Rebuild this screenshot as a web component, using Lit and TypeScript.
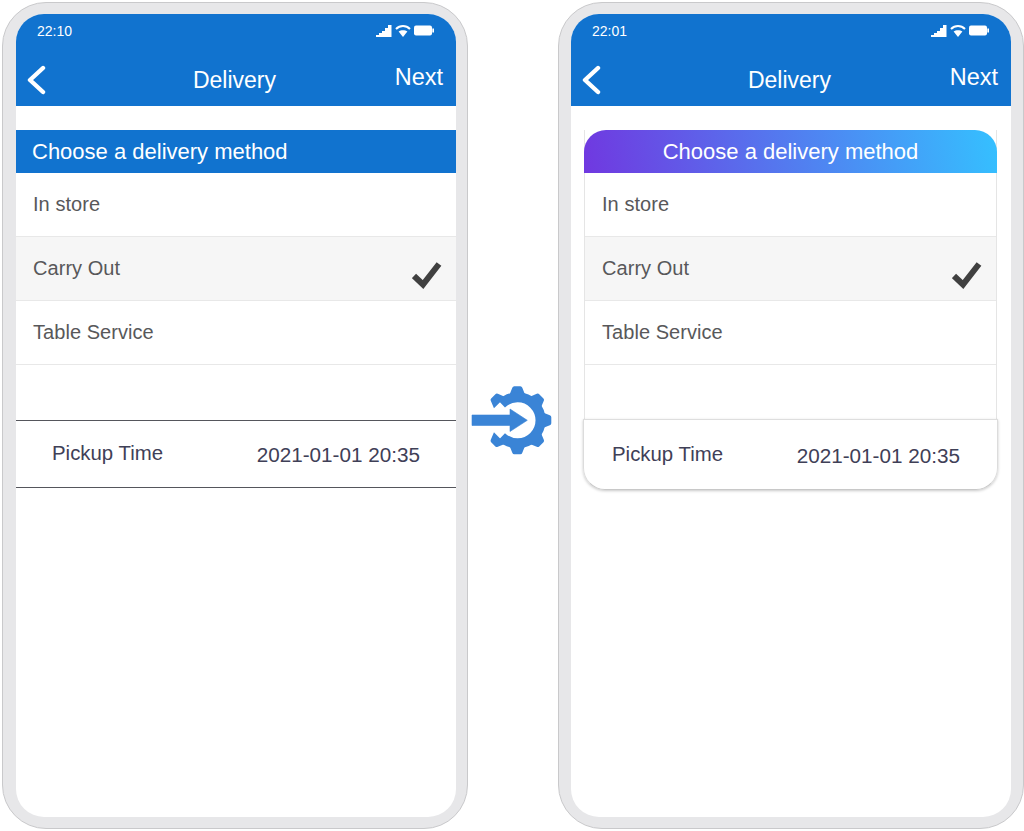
import { LitElement, html, css, svg } from "lit";
import { customElement, property } from "lit/decorators.js";

@customElement("phone-screen")
class PhoneScreen extends LitElement {
  @property() time = "";
  @property({ type: Boolean, reflect: true }) fancy = false;

  static styles = css`
    :host { display: block; width: 466px; height: 827px; }
    .frame {
      box-sizing: border-box; width: 100%; height: 100%;
      background: #e7e7e9; border: 1px solid #c9c9cb; border-radius: 44px;
      padding: 11px 11px 11px 13px;
    }
    :host([fancy]) .frame { padding: 11px 12px 11px 12px; }
    .screen {
      height: 100%; background: #fff; border-radius: 28px; overflow: hidden;
      font-family: "Liberation Sans", Arial, sans-serif; display: flex; flex-direction: column;
    }
    .top { background: #1173cf; height: 92px; color: #fff; flex: none; display: flex; flex-direction: column; }
    .status { height: 33px; display: flex; align-items: center; justify-content: space-between; padding: 0 22px 0 21px; font-size: 14px; }
    .status-icons { display: flex; align-items: center; gap: 3px; }
    .nav { display: grid; grid-template-columns: 1fr auto 1fr; padding: 0 13px 0 10px; align-items: center; height: 59px; }
    .nav svg { display: block; margin-top: 7px; }
    .title { font-size: 23px; margin-top: 8px; }
    .next { justify-self: end; font-size: 23.5px; margin-top: 2px; }
    .body { padding-top: 24px; display: flex; flex-direction: column; }
    .card { display: flex; flex-direction: column; }
    :host([fancy]) .card { margin: 0 14px 0 13px; border-left: 1px solid #e5e5e5; border-right: 1px solid #e5e5e5; }
    .head {
      background: #1173cf; color: #fff; height: 43px; line-height: 44px; font-size: 22px;
      padding-left: 16px;
    }
    :host([fancy]) .head {
      background: linear-gradient(80deg, #7038e0 0%, #35c0ff 100%); border-radius: 22px 22px 0 0;
      margin: 0 -1px; padding: 0; text-align: center;
    }
    .row {
      box-sizing: border-box; height: 64px; border-bottom: 1.5px solid #e8e8e8; padding: 0 14px 0 17px;
      font-size: 20px; letter-spacing: .05px; color: #58585a; display: flex; justify-content: space-between; position: relative;
    }
    :host([fancy]) .row { padding: 0 14px 0 17px; }
    .row span { margin-top: 20px; }
    .row.sel { background: #f6f6f6; }
    .row svg { margin-top: 25px; }
    .blank { height: 55px; }
    :host([fancy]) .blank { height: 54px; }
    .pickup {
      box-sizing: border-box; height: 68px; border-top: 1.5px solid #55565c; border-bottom: 1.5px solid #55565c;
      display: flex; justify-content: space-between; align-items: center; padding: 2px 36px 0 36px;
      color: #3f4057; font-size: 20.7px;
    }
    :host([fancy]) .pickup {
      height: 71px; margin: 0 13px -1px 12px; border: 1px solid #dcdcdc; border-top: 1.5px solid #dedede; border-bottom: 1px solid #c8c8c8;
      border-radius: 0 0 22px 22px; box-shadow: 0 1px 3px rgba(0,0,0,.22); padding: 2px 37px 0 28px;
    }
    .pickup .l { margin-top: -3px; font-size: 20.4px; }
  `;

  render() {
    return html`<div class="frame"><div class="screen">
      <div class="top">
        <div class="status"><span>${this.time}</span>
          <span class="status-icons">
            <svg width="16" height="12" viewBox="0 0 16 12" fill="#fff"><path d="M0 12 V10 H3 V8 H6 V6 H9 V3 H12 V0 H15.5 V12 Z"/></svg>
            <svg width="16" height="12" viewBox="0 0 16 12" fill="none" stroke="#fff" stroke-width="2"><path d="M1 4 C5 0 11 0 15 4"/><path d="M8 12 L3.6 6.6 C6 4.8 10 4.8 12.4 6.6 Z" fill="#fff" stroke="none"/></svg>
            <svg width="20" height="11" viewBox="0 0 20 11"><rect x="0" y="0.5" width="18" height="10" rx="2" fill="#fff"/><rect x="18.3" y="3.5" width="1.7" height="4" fill="#fff"/></svg>
          </span></div>
        <div class="nav">
          <svg width="22" height="30" viewBox="0 0 22 30" fill="none" stroke="#fff" stroke-width="4.4" stroke-linecap="round" stroke-linejoin="round"><path d="M17 3 L4 15 L17 27"/></svg>
          <span class="title">Delivery</span>
          <span class="next">Next</span>
        </div>
      </div>
      <div class="body">
        <div class="card">
          <div class="head">Choose a delivery method</div>
          <div class="row"><span>In store</span></div>
          <div class="row sel"><span>Carry Out</span>
            <svg width="30" height="28" viewBox="0 0 30 28" fill="none" stroke="#404040" stroke-width="6" stroke-linecap="butt" stroke-linejoin="miter"><path d="M2 14 L11 22.5 L27 2"/></svg></div>
          <div class="row"><span>Table Service</span></div>
          <div class="blank"></div>
        </div>
        <div class="pickup"><span class="l">Pickup Time</span><span>2021-01-01 20:35</span></div>
      </div>
    </div></div>`;
  }
}

@customElement("app-root")
class AppRoot extends LitElement {
  static styles = css`
    :host { display: block; width: 1024px; height: 831px; background: #fff; overflow: hidden; }
    .wrap { display: flex; padding: 2px 0 0 2px; align-items: flex-start; }
    .link { width: 90px; height: 827px; flex: none; display: flex; align-items: center; justify-content: center; }
    .link svg { display: block; margin-top: 11px; margin-left: -2px; }
  `;
  gear() {
    const teeth = [0, 45, 90, 135, 180, 225, 315];
    return svg`<svg width="82" height="72" viewBox="0 0 82 72">
      <g transform="translate(46.3 35.3)">
        ${teeth.map((a) => svg`<path d="M-8 -25 L-5 -32.5 Q-4.5 -34 -3 -34 H3 Q4.5 -34 5 -32.5 L8 -25 Z" fill="#3a84d6" transform="rotate(${a})"/>`)}
        <path d="M-15.8 -16.5 A23 23 0 1 1 -15.8 16.5" fill="none" stroke="#3a84d6" stroke-width="10"/>
      </g>
      <path d="M1 30 H39 V24 L56.3 35.3 L39 46.5 V40.5 H1 Z" fill="#3a84d6" stroke="#3a84d6" stroke-width="0.6" stroke-linejoin="round"/>
    </svg>`;
  }
  render() {
    return html`<div class="wrap">
      <phone-screen time="22:10"></phone-screen>
      <div class="link">${this.gear()}</div>
      <phone-screen time="22:01" fancy></phone-screen>
    </div>`;
  }
}
